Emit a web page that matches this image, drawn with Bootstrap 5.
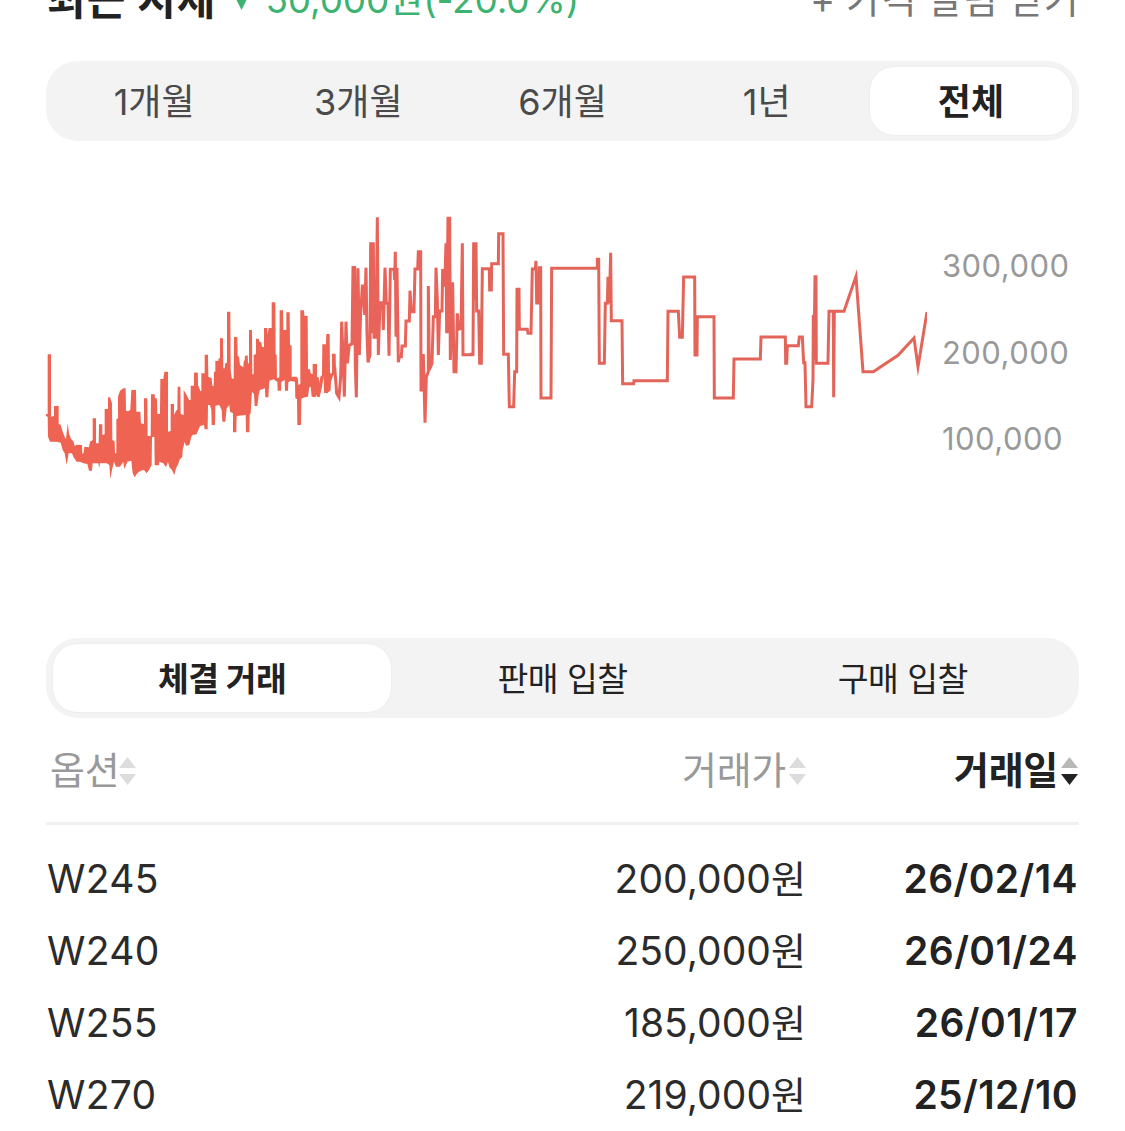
<!DOCTYPE html>
<html lang="ko">
<head>
<meta charset="utf-8">
<meta name="viewport" content="width=device-width, initial-scale=1">
<title>시세</title>
<link rel="stylesheet" href="https://cdn.jsdelivr.net/npm/bootstrap@5.3.0/dist/css/bootstrap.min.css">
<style>
body{font-family:Inter,"Noto Sans CJK KR",sans-serif;color:#222;background:#fff;overflow:hidden;height:1131px}
.page{padding:0 46px}
.topline{height:61px;line-height:50px;margin-top:-25px;margin-bottom:25px;white-space:nowrap}
.top-title{font-size:42px;letter-spacing:1px;font-weight:700;padding-left:1px}
.top-drop{font-size:37px;color:#3db372;letter-spacing:-.15px}
.top-alert{font-size:38px;color:#777;letter-spacing:.2px;line-height:48px}
.seg{background:#f3f3f3;border-radius:32px;height:80px;padding:6px}
.seg-item{flex:1 1 0;border-radius:24px;margin:0 1px;padding-top:2px;display:flex;align-items:center;justify-content:center;color:#4a4a4a;font-size:36px;white-space:nowrap}
.seg-item.on{background:#fff;color:#222;font-weight:700;box-shadow:0 0 2px rgba(0,0,0,.08)}
.seg-deal .seg-item{font-size:33.5px;color:#222;letter-spacing:-.55px}
.chart{height:497px;padding-top:59px}
.axis{width:152px;padding:23px 0 0 15px;font-size:31px;color:#999;line-height:86.7px;letter-spacing:.45px}
.line-row{height:72px;line-height:72px;font-size:39px;letter-spacing:.3px}
.c-option{padding-left:1px;color:#2b2b2b}
.c-price{width:300px;text-align:right;color:#2b2b2b;letter-spacing:.05px}
.c-date{width:273px;text-align:right;font-weight:600;padding-right:1px}
.line-row .c-date{letter-spacing:.4px}
.won{font-size:38px;letter-spacing:0}
.deals{padding-top:18px}
.headline-row{height:107px;border-bottom:3px solid #f0f0f0;font-size:38px;color:#999;letter-spacing:-.3px}
.headline-row>div{display:flex;align-items:center}
.headline-row .c-date{color:#222}
.sorter{width:17px;height:28px;margin-left:3px;margin-top:2px}
</style>
<script src="https://cdn.jsdelivr.net/npm/bootstrap@5.3.0/dist/js/bootstrap.bundle.min.js"></script>
</head>
<body>
<main class="page">
  <header class="topline d-flex justify-content-between">
    <div class="d-flex">
      <span class="top-title">최근 시세</span>
      <svg width="17" height="50" viewBox="0 0 17 50" class="ms-3 me-3"><path d="M0 18H17L8.500 35Z" fill="#3db372"/></svg>
      <span class="top-drop">50,000원(-20.0%)</span>
    </div>
    <span class="top-alert">+ 가격 알림 받기</span>
  </header>

  <nav class="seg d-flex">
    <div class="seg-item">1개월</div><div class="seg-item">3개월</div><div class="seg-item">6개월</div><div class="seg-item">1년</div><div class="seg-item on">전체</div>
  </nav>

  <section class="chart d-flex">
    <svg width="881" height="300" viewBox="46 200 881 300" class="flex-shrink-0">
      <g fill="#ee6352">
        <path transform="translate(40 280) scale(.33333)" d="M18 402L23 402 23 223 33 223 33 410 42 408 42 378 56 378 56 432 62 434 68 455 74 470 78 478 83 430 87 460 92 475 101 486 104 498 110 494 126 495 127 522 131 518 133 500 147 502 150 485 158 480 158 415 168 415 168 490 176 490 177 433 187 433 187 465 194 463 194 387 204 387 204 352 210 352 216 370 217 480 224 484 225 520 229 520 229 418 234 415 234 350 240 332 250 325 257 325 258 392 264 394 271 390 274 330 288 330 289 395 301 395 303 430 312 432 312 355 322 355 323 468 332 468 333 343 344 343 345 354 351 356 352 402 360 402 361 297 370 297 373 275 384 275 384 455 392 453 392 372 402 372 402 405 408 392 412 390 413 320 421 320 422 402 431 405 431 330 440 345 447 360 452 360 452 317 462 317 463 278 473 278 474 315 480 330 480 435 474 440 468 462 458 465 454 470 448 495 438 497 434 485 428 510 427 530 418 540 415 552 408 565 403 585 396 570 388 562 384 545 378 562 370 550 358 545 357 556 344 556 343 470 336 472 335 555 327 570 320 580 312 570 302 572 292 580 284 592 278 580 274 542 262 545 253 568 250 545 240 560 228 560 222 545 216 570 211 597 208 555 200 550 180 550 178 565 175 550 158 550 156 572 147 572 142 552 130 550 120 545 110 545 100 530 96 520 86 520 80 555 74 520 68 510 62 488 50 485 30 485 24 470 23 410 18 408Z"/>
        <path transform="translate(180 280) scale(.33333)" d="M42 278L52 278 54 320 56 333 64 333 64 280 74 280 74 224 84 224 85 290 95 295 97 318 101 318 102 275 106 275 106 243 115 243 116 235 120 235 120 175 129 175 130 265 134 265 136 250 141 248 141 95 151 95 152 270 155 295 161 297 162 171 172 171 173 228 177 230 180 255 190 262 191 245 194 240 195 228 203 226 204 250 207 250 207 150 216 150 217 283 221 283 221 225 228 222 228 176 236 176 238 185 244 187 246 200 252 202 252 144 262 144 262 165 266 144 275 144 275 67 286 67 287 222 290 225 291 295 298 292 299 91 309 91 310 150 319 150 319 97 329 97 330 195 335 197 335 290 350 290 354 297 355 315 361 312 361 91 372 91 373 107 383 108 384 268 390 268 392 280 398 282 398 252 411 252 411 290 416 292 418 310 421 290 426 285 427 193 438 193 439 162 449 162 450 280 456 280 456 221 467 221 468 285 471 318 471 340 466 340 465 290 460 285 453 305 452 330 442 340 432 338 431 290 426 320 419 352 411 350 409 345 406 352 395 350 392 320 388 322 384 350 376 352 366 355 364 357 363 435 352 435 351 357 346 355 345 305 333 303 325 306 324 332 315 332 314 300 304 306 303 332 293 332 292 305 287 303 282 298 268 302 265 352 256 352 255 325 240 330 236 345 232 378 224 378 222 342 216 335 212 400 209 405 208 457 198 457 197 405 170 408 169 457 159 457 159 400 150 395 148 375 140 385 136 425 127 425 125 390 118 375 106 377 105 435 95 435 94 390 90 375 84 375 83 448 74 448 72 435 60 438 55 450 50 462 42 464Z"/>
      </g>
      <g fill="none" stroke="#e3655a" stroke-width="9">
        <path stroke="#e8645a" transform="translate(320 200) scale(.33333)" d="M44 500L50 580 57 592 62 530 65 365 70 490 73 590 78 365 82 490 88 435 96 432 99 198 100 430 104 198 106 500 109 592 112 350 114 205 118 465 122 340 127 258 130 258 134 345 138 203 141 400 144 487 150 465 152 127 156 400 160 127 162 412 168 412 172 52 175 465 180 308 188 308 190 390 195 203 199 310 204 310 207 467 211 208 222 208 224 240 226 155 228 410 231 203 235 487 238 470 244 470 246 438 256 438 258 363 268 363 270 272 274 335 282 335 285 207 293 207 295 155 302 155 303 570 306 570 310 462 315 668 319 530 325 515 325 258 328 510 336 490 340 350 346 350 348 203 352 300 355 465 359 333 366 333 368 207 374 260 378 130 380 400 384 50 386 400 389 50 391 480 398 247 402 515 408 515 412 340 416 388 423 385 427 130 429 464 460 464"/>
        <path transform="translate(470 200) scale(.33333)" d="M0 463L9 463 11 127 15 300 18 127 20 333 26 333 29 490 34 490 37 206 58 206 59 270 64 270 65 191 85 191 86 101 99 101 101 463 115 463 118 620 131 620 134 515 140 515 141 268 147 268 148 388 172 388 174 400 183 400 187 207 196 207 198 183 200 309 205 309 208 203 212 203 213 594 243 594 245 205 382 205 382 178 386 178 388 490 403 490 406 310 412 310 414 230 418 310 422 158 424 362 456 362 458 551 491 551 492 542 592 542 594 334 625 334 629 412 637 412 641 231 660 231"/>
        <path transform="translate(690 200) scale(.33333)" d="M0 231L14 231 15 465 21 465 22 350 72 350 73 594 130 594 132 477 211 477 213 411 286 411 287 490 290 490 292 437 325 437 328 411 337 411 341 488 345 488 348 620 365 620 369 540 370 345 372 480 375 230 378 230 379 490 414 490 417 334 430 334 431 592 433 334 445 334"/>
        <path stroke-miterlimit="12" transform="translate(690 200) scale(.33333)" d="M440 334L462 334 498 229 519 515 550 515 624 466 672 414 684 500 711 336"/>
      </g>
    </svg>
    <div class="axis"><div>300,000</div><div>200,000</div><div>100,000</div></div>
  </section>

  <nav class="seg seg-deal d-flex">
    <div class="seg-item on">체결 거래</div><div class="seg-item">판매 입찰</div><div class="seg-item">구매 입찰</div>
  </nav>

  <section>
    <div class="headline-row d-flex">
      <div class="me-auto ps-0"><span class="ms-1">옵션</span><svg class="sorter ms-0" viewBox="0 0 17 28"><path d="M0 11L8.500 0 17 11ZM0 17H17L8.500 28Z" fill="#dcdcdc"/></svg></div>
      <div>거래가<svg class="sorter" viewBox="0 0 17 28"><path d="M0 11L8.500 0 17 11ZM0 17H17L8.500 28Z" fill="#dcdcdc"/></svg></div>
      <div class="c-date justify-content-end fw-bold">거래일<svg class="sorter" viewBox="0 0 17 28"><path d="M0 11L8.500 0 17 11Z" fill="#b8b8b8"/><path d="M0 17H17L8.500 28Z" fill="#222"/></svg></div>
    </div>
    <div class="deals">
      <div class="line-row d-flex"><div class="me-auto c-option">W245</div><div class="c-price">200,000<span class="won">원</span></div><div class="c-date">26/02/14</div></div>
      <div class="line-row d-flex"><div class="me-auto c-option">W240</div><div class="c-price">250,000<span class="won">원</span></div><div class="c-date">26/01/24</div></div>
      <div class="line-row d-flex"><div class="me-auto c-option">W255</div><div class="c-price">185,000<span class="won">원</span></div><div class="c-date">26/01/17</div></div>
      <div class="line-row d-flex"><div class="me-auto c-option">W270</div><div class="c-price">219,000<span class="won">원</span></div><div class="c-date">25/12/10</div></div>
    </div>
  </section>
</main>
</body>
</html>
